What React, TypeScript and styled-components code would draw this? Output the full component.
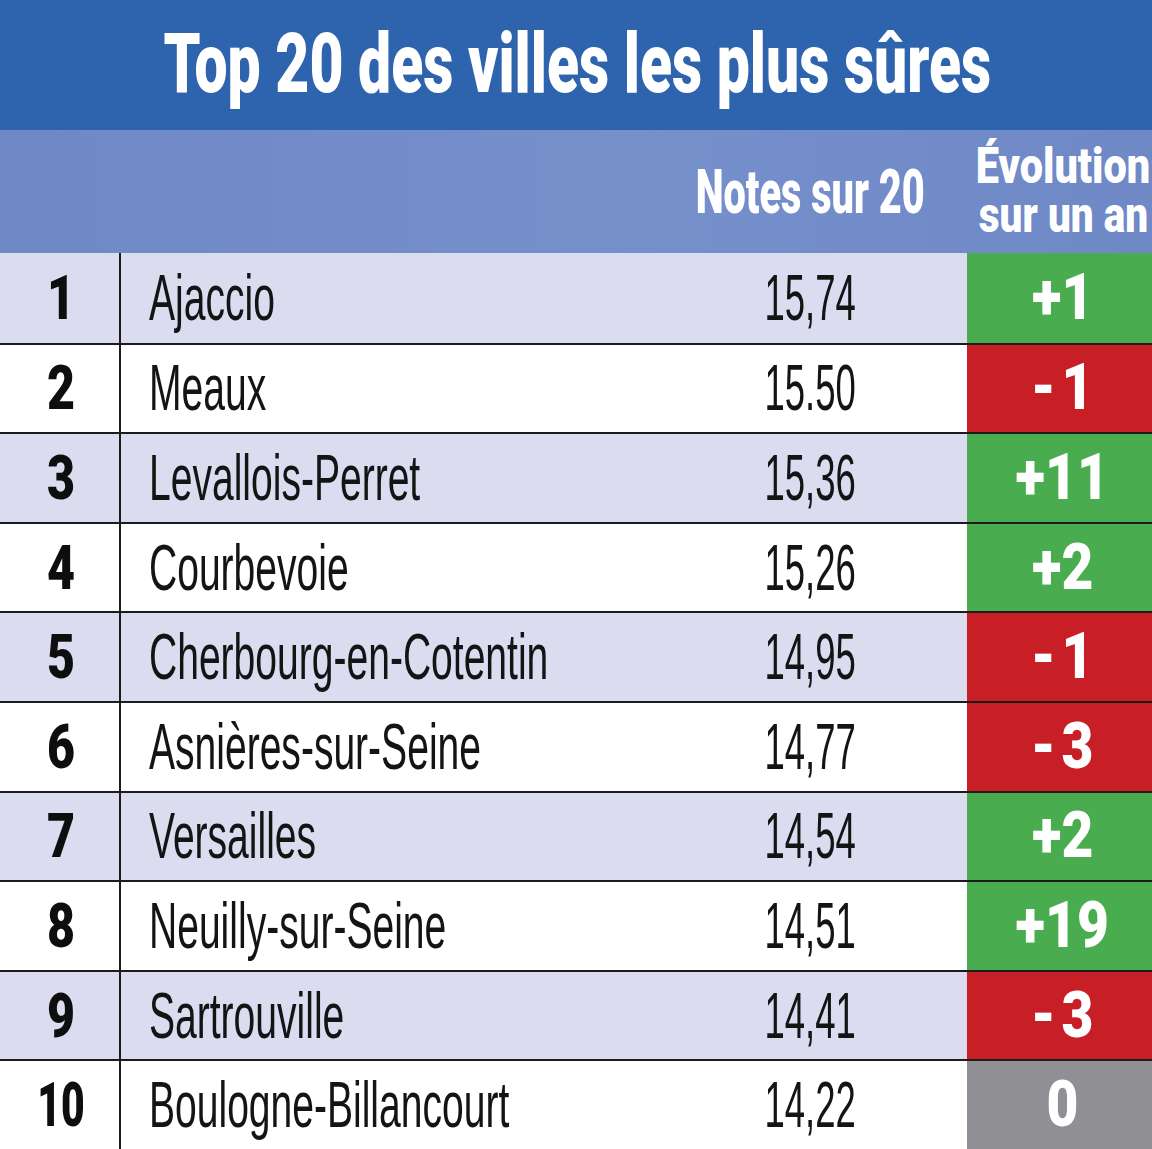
import styled, { createGlobalStyle } from 'styled-components'

type Trend = 'up' | 'down' | 'flat'

type CityRow = {
  rank: number
  city: string
  score: string
  evolution: string
  trend: Trend
}

const rows: CityRow[] = [
  { rank: 1, city: 'Ajaccio', score: '15,74', evolution: '+1', trend: 'up' },
  { rank: 2, city: 'Meaux', score: '15.50', evolution: '-1', trend: 'down' },
  { rank: 3, city: 'Levallois-Perret', score: '15,36', evolution: '+11', trend: 'up' },
  { rank: 4, city: 'Courbevoie', score: '15,26', evolution: '+2', trend: 'up' },
  { rank: 5, city: 'Cherbourg-en-Cotentin', score: '14,95', evolution: '-1', trend: 'down' },
  { rank: 6, city: 'Asnières-sur-Seine', score: '14,77', evolution: '-3', trend: 'down' },
  { rank: 7, city: 'Versailles', score: '14,54', evolution: '+2', trend: 'up' },
  { rank: 8, city: 'Neuilly-sur-Seine', score: '14,51', evolution: '+19', trend: 'up' },
  { rank: 9, city: 'Sartrouville', score: '14,41', evolution: '-3', trend: 'down' },
  { rank: 10, city: 'Boulogne-Billancourt', score: '14,22', evolution: '0', trend: 'flat' },
]

const trendColor: Record<Trend, string> = {
  up: '#49ad50',
  down: '#c81e26',
  flat: '#8f8f94',
}

const App: React.FC = () => {
  return (
    <>
      <GlobalStyle />
      <Page>
        <TitleBar>
          <Squeeze $scale={0.7}>Top 20 des villes les plus sûres</Squeeze>
        </TitleBar>
        <HeaderRow>
          <span />
          <span />
          <HeaderCell>
            <Squeeze $scale={0.65}>Notes sur 20</Squeeze>
          </HeaderCell>
          <EvolutionHead>
            <Squeeze $scale={0.83}>Évolution</Squeeze>
            <Squeeze $scale={0.81}>sur un an</Squeeze>
          </EvolutionHead>
        </HeaderRow>
        <Table>
          {rows.map((row, i) => (
            <Row key={row.rank} $shaded={i % 2 === 0} $first={i === 0}>
              <RankCell>
                <Squeeze $scale={row.rank === 10 ? 0.66 : 0.78}>{row.rank}</Squeeze>
              </RankCell>
              <CityCell>
                <LeftSqueeze $scale={0.61}>{row.city}</LeftSqueeze>
              </CityCell>
              <ScoreCell>
                <Squeeze $scale={0.57}>{row.score}</Squeeze>
              </ScoreCell>
              <EvolutionCell $trend={row.trend}>
                <Squeeze $scale={0.86}>{row.evolution.replace('-', '-\u200A')}</Squeeze>
              </EvolutionCell>
            </Row>
          ))}
        </Table>
      </Page>
    </>
  )
}

const GlobalStyle = createGlobalStyle`
  html, body {
    margin: 0;
    padding: 0;
    background: #ffffff;
  }
  body {
    font-family: "Liberation Sans", Arial, sans-serif;
  }
`

const heavy = `"Roboto", "Liberation Sans", Arial, sans-serif`

const columns = '121px 532px 314px 185px'

const Page = styled.div`
  width: 1152px;
  overflow: hidden;
`

type SqueezeStyleType = {
  $scale: number
}

const Squeeze = styled.span<SqueezeStyleType>`
  display: inline-block;
  white-space: nowrap;
  transform: scaleX(${(p) => p.$scale});
  transform-origin: center;
`

const LeftSqueeze = styled(Squeeze)`
  transform-origin: left center;
`

const TitleBar = styled.div`
  height: 130px;
  background: #2e63ad;
  color: #ffffff;
  display: flex;
  align-items: center;
  justify-content: center;
  font-family: ${heavy};
  font-size: 84px;
  font-weight: 900;
  line-height: 1;
  padding-bottom: 2px;
  padding-left: 2px;
  box-sizing: border-box;
`

const HeaderRow = styled.div`
  display: grid;
  grid-template-columns: ${columns};
  height: 123px;
  background: linear-gradient(90deg, #6f88c6 0%, #7690cc 55%, #6f88c6 100%);
  color: #ffffff;
  font-family: ${heavy};
  font-weight: 900;
  line-height: 1;
`

const HeaderCell = styled.div`
  display: flex;
  align-items: center;
  justify-content: center;
  font-size: 61px;
  padding-top: 2px;
`

const EvolutionHead = styled.div`
  display: flex;
  flex-direction: column;
  align-items: center;
  justify-content: center;
  font-size: 50px;
  line-height: 49px;
  padding-left: 8px;
  padding-bottom: 2px;
`

const Table = styled.div`
  display: grid;
  grid-auto-rows: 89.6px;
`

type RowStyleType = {
  $shaded: boolean
  $first: boolean
}

const Row = styled.div<RowStyleType>`
  display: grid;
  grid-template-columns: ${columns};
  background: ${(p) => (p.$shaded ? '#dbdcf0' : '#ffffff')};
  border-top: ${(p) => (p.$first ? 'none' : '2px solid #1c1c1c')};
  color: #141414;
  line-height: 1;
`

const RankCell = styled.div`
  display: flex;
  align-items: center;
  justify-content: center;
  border-right: 2px solid #1c1c1c;
  font-family: ${heavy};
  font-size: 62px;
  font-weight: 900;
  color: #0e0e0e;
  padding-left: 2px;
`

const CityCell = styled.div`
  display: flex;
  align-items: center;
  padding-left: 28px;
  font-size: 64px;
  font-weight: 400;
`

const ScoreCell = styled.div`
  display: flex;
  align-items: center;
  justify-content: center;
  font-size: 64px;
  font-weight: 400;
`

type EvolutionStyleType = {
  $trend: Trend
}

const EvolutionCell = styled.div<EvolutionStyleType>`
  display: flex;
  align-items: center;
  justify-content: center;
  background: ${(p) => trendColor[p.$trend]};
  color: #ffffff;
  font-family: ${heavy};
  font-size: 64px;
  font-weight: 900;
  padding-left: 6px;
`

export default App
